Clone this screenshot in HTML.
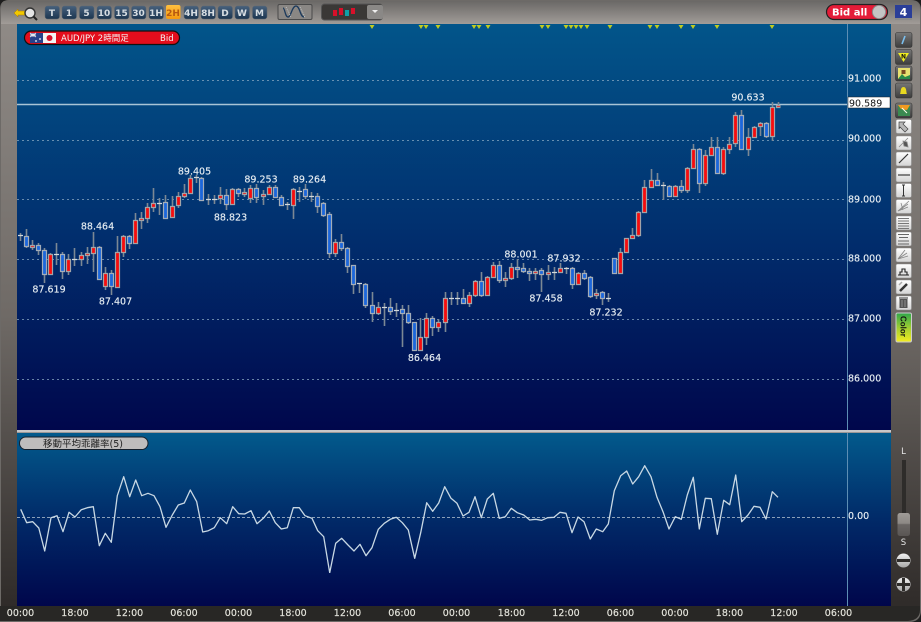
<!DOCTYPE html>
<html lang="ja">
<head>
<meta charset="utf-8">
<title>AUD/JPY Chart</title>
<style>
html,body{margin:0;padding:0;width:921px;height:622px;overflow:hidden;background:#222}
svg{display:block}
text{font-family:"DejaVu Sans","Liberation Sans",sans-serif;font-size:9.5px;fill:#e6edf2;stroke:#e6edf2;stroke-width:.15px}
.tb{font-weight:bold;font-size:9px;fill:#d6dde2;stroke:none;text-anchor:middle}
.tl{text-anchor:middle;fill:#e4e4dc;stroke:#e4e4dc}
.cl{text-anchor:middle}
.jp{font-family:"DejaVu Sans","Noto Sans CJK JP",sans-serif;stroke:none}
.n{stroke:none}
</style>
</head>
<body>
<svg width="921" height="622" viewBox="0 0 921 622" xmlns="http://www.w3.org/2000/svg">
<defs>
<filter id="soft" x="0" y="0" width="100%" height="100%"><feGaussianBlur stdDeviation=".3"/></filter>
<linearGradient id="pm" x1="0" y1="0" x2="0" y2="1"><stop offset="0" stop-color="#02558a"/><stop offset=".5" stop-color="#01306f"/><stop offset="1" stop-color="#00074c"/></linearGradient>
<linearGradient id="ps" x1="0" y1="0" x2="0" y2="1"><stop offset="0" stop-color="#025a8c"/><stop offset=".5" stop-color="#012a68"/><stop offset="1" stop-color="#00064b"/></linearGradient>
<linearGradient id="fl" x1="0" y1="0" x2="0" y2="1"><stop offset="0" stop-color="#8f8a86"/><stop offset=".5" stop-color="#6f6a66"/><stop offset="1" stop-color="#2f2b29"/></linearGradient>
<linearGradient id="ft" x1="0" y1="0" x2="0" y2="1"><stop offset="0" stop-color="#6a6866"/><stop offset="1" stop-color="#a19c98"/></linearGradient>
<linearGradient id="btn" x1="0" y1="0" x2="0" y2="1"><stop offset="0" stop-color="#47617d"/><stop offset="1" stop-color="#1b3550"/></linearGradient>
<linearGradient id="org" x1="0" y1="0" x2="0" y2="1"><stop offset="0" stop-color="#ffc040"/><stop offset="1" stop-color="#f59a10"/></linearGradient>
<linearGradient id="tool" x1="0" y1="0" x2="0" y2="1"><stop offset="0" stop-color="#777"/><stop offset="1" stop-color="#3c3c3c"/></linearGradient>
<linearGradient id="wt" x1="0" y1="0" x2="0" y2="1"><stop offset="0" stop-color="#fff"/><stop offset="1" stop-color="#d4d4d4"/></linearGradient>
<linearGradient id="col" x1="0" y1="0" x2="0" y2="1"><stop offset="0" stop-color="#2ea84a"/><stop offset=".55" stop-color="#a8d030"/><stop offset="1" stop-color="#f4ec20"/></linearGradient>
<linearGradient id="thumb" x1="0" y1="0" x2="0" y2="1"><stop offset="0" stop-color="#a09c98"/><stop offset=".45" stop-color="#8c8884"/><stop offset=".5" stop-color="#6a6664"/><stop offset="1" stop-color="#5a5654"/></linearGradient>
<linearGradient id="circ" x1="0" y1="0" x2="0" y2="1"><stop offset="0" stop-color="#f2f2f2"/><stop offset="1" stop-color="#a8a8a8"/></linearGradient>
</defs>

<!-- frame -->
<rect width="921" height="622" fill="#1e1e1e"/>
<path d="M9 0H911Q921 0 921 10V610Q921 622 909 622H0V9Q0 0 9 0Z" fill="#6d6a67"/>
<path d="M9 1H911Q920 1 920 10V24H1V9Q1 1 9 1Z" fill="url(#ft)"/>
<rect x="1" y="24" width="16" height="582" fill="url(#fl)"/>
<path d="M891 24H920V606Q920 610 916 606H891Z" fill="url(#fl)"/>
<path d="M0 606H920V610Q920 620 908 621H0Z" fill="#282725"/>

<!-- panels -->
<rect x="17" y="24" width="874" height="406" fill="url(#pm)"/>
<rect x="17" y="430" width="874" height="2.5" fill="#c9c7c8"/>
<rect x="17" y="433" width="874" height="173" fill="url(#ps)"/>

<!-- grid -->
<g stroke="#8aa8c2" stroke-width="1" stroke-dasharray="2 3" fill="none" opacity=".75">
<path d="M17 80.5H847M17 140.5H847M17 199.5H847M17 259.5H847M17 319.5H847M17 379.5H847"/>
</g>
<path d="M17 517.5H847" stroke="#b8c8d4" stroke-width="1" stroke-dasharray="3 2" fill="none" opacity=".75"/>
<path d="M847.5 24V430M847.5 433V606" stroke="#5d8eb4" stroke-width="1" fill="none"/>
<path d="M17 104.5H847" stroke="#a8c4d6" stroke-width="1.4" fill="none"/>

<g filter="url(#soft)">
<!-- wicks -->
<path fill="none" stroke="#7b8894" stroke-width="1.6" d="M20.5 233V241M26.5 229V248M32.5 240V250M38.5 243V255M44.5 248V283M50.5 253V275M56.5 243V265M62.5 252V279M68.5 254V275M74.5 248V266M81.5 252V266M87.5 247V264M93.5 232V272M99.5 246V280M105.5 267V290M111.5 270V295M117.5 236V287M123.5 235V257M129.5 235V249M135.5 213V244M141.5 212V229M147.5 203V223M153.5 188V212M159.5 198V215M165.5 195V218M172.5 196V218M178.5 192V208M184.5 184V198M190.5 175V193M196.5 175V183M201.5 177V201M208.5 194V205M214.5 195V204M220.5 187V204M226.5 189V210M232.5 188V205M238.5 188V197M244.5 188V197M250.5 185V203M256.5 184V203M263.5 190V205M269.5 185V195M275.5 185V198M281.5 195V206M287.5 202V210M293.5 188V219M299.5 187V202M305.5 184V199M311.5 192V202M317.5 193V213M323.5 202V217M329.5 212V258M335.5 239V257M341.5 234V251M347.5 247V273M353.5 265V294M359.5 283V293M365.5 283V308M372.5 292V322M378.5 302V315M384.5 303V326M390.5 298V315M396.5 303V317M402.5 305V347M408.5 305V324M414.5 322V351M420.5 318V351M426.5 313V345M432.5 316V336M438.5 319V332M445.5 292V332M451.5 292V305M457.5 292V305M463.5 289V304M469.5 292V307M475.5 280V297M481.5 272V297M487.5 276V295M493.5 262V277M499.5 261V283M505.5 272V287M511.5 263V280M517.5 259V278M523.5 263V273M529.5 268V281M535.5 268V280M541.5 268V292M548.5 265V280M554.5 267V280M560.5 263V273M566.5 267V274M572.5 267V289M578.5 272V285M584.5 270V280M590.5 276V298M596.5 289V299M602.5 291V305M608.5 293V302M614.5 258V274M620.5 248V273M626.5 238V253M632.5 228V238M638.5 211V237M644.5 180V213M651.5 169V188M657.5 173V186M663.5 182V200M669.5 185V197M675.5 185V197M681.5 180V193M687.5 167V193M693.5 144V169M699.5 148V193M705.5 150V186M711.5 137V156M717.5 137V174M723.5 147V175M729.5 137V154M735.5 112V147M741.5 110V150M748.5 128V156M754.5 126V138M760.5 122V136M766.5 122V138M772.5 102V141M778.5 102V107"/>

<!-- doji -->
<path fill="none" stroke="#d2d8dc" stroke-width="1.3" d="M18 235.5h5M54 254.5h5M72 259.5h5M157 203.5h5M194 177.5h5M206 199.5h5M212 199.5h5M285 204.5h5M297 191.5h5M309 196.5h5M357 283.5h5M382 307.5h5M394 310.5h5M449 298.5h5M455 298.5h5M552 272.5h5M564 268.5h5M606 298.5h5M661 185.5h5"/>

<!-- red bodies -->
<path fill="#f60a0a" stroke="#a3a3a8" stroke-width="1.2" d="M30.5 245.5h4v2h-4zM48.5 254.5h4v20h-4zM66.5 259.5h4v12h-4zM79.5 255.5h4v4h-4zM85.5 253.5h4v2h-4zM91.5 247.5h4v6h-4zM103.5 273.5h4v13h-4zM115.5 252.5h4v35h-4zM121.5 236.5h4v16h-4zM133.5 220.5h4v23h-4zM139.5 218.5h4v2h-4zM145.5 207.5h4v11h-4zM151.5 203.5h4v4h-4zM170.5 206.5h4v11h-4zM176.5 196.5h4v9h-4zM182.5 193.5h4v3h-4zM188.5 178.5h4v15h-4zM218.5 195.5h4v3h-4zM230.5 189.5h4v15h-4zM242.5 192.5h4v2h-4zM248.5 188.5h4v10h-4zM261.5 194.5h4v2h-4zM267.5 187.5h4v7h-4zM291.5 189.5h4v16h-4zM333.5 242.5h4v11h-4zM376.5 307.5h4v6h-4zM418.5 337.5h4v13h-4zM424.5 318.5h4v19h-4zM436.5 322.5h4v5h-4zM443.5 298.5h4v24h-4zM467.5 295.5h4v8h-4zM473.5 281.5h4v14h-4zM485.5 277.5h4v18h-4zM491.5 265.5h4v12h-4zM503.5 278.5h4v2h-4zM509.5 267.5h4v11h-4zM533.5 271.5h4v2h-4zM546.5 272.5h4v2h-4zM558.5 268.5h4v4h-4zM576.5 273.5h4v11h-4zM594.5 293.5h4v2h-4zM618.5 252.5h4v21h-4zM624.5 238.5h4v14h-4zM630.5 235.5h4v3h-4zM636.5 212.5h4v23h-4zM642.5 187.5h4v25h-4zM649.5 180.5h4v7h-4zM673.5 186.5h4v10h-4zM685.5 168.5h4v22h-4zM691.5 149.5h4v19h-4zM703.5 155.5h4v28h-4zM709.5 147.5h4v8h-4zM721.5 149.5h4v24h-4zM727.5 144.5h4v5h-4zM733.5 115.5h4v28h-4zM746.5 137.5h4v12h-4zM752.5 127.5h4v10h-4zM758.5 123.5h4v3h-4zM770.5 107.5h4v29h-4zM776.5 105.5h4v2h-4z"/>

<!-- blue bodies -->
<path fill="#1a66dc" stroke="#a3adb8" stroke-width="1.2" d="M24.5 236.5h4v10h-4zM36.5 245.5h4v5h-4zM42.5 250.5h4v24h-4zM60.5 254.5h4v17h-4zM97.5 247.5h4v32h-4zM109.5 273.5h4v13h-4zM127.5 236.5h4v7h-4zM163.5 202.5h4v16h-4zM199.5 178.5h4v22h-4zM224.5 195.5h4v9h-4zM236.5 189.5h4v4h-4zM254.5 188.5h4v9h-4zM273.5 187.5h4v10h-4zM279.5 197.5h4v8h-4zM303.5 189.5h4v7h-4zM315.5 196.5h4v10h-4zM321.5 203.5h4v12h-4zM327.5 214.5h4v39h-4zM339.5 242.5h4v6h-4zM345.5 248.5h4v18h-4zM351.5 265.5h4v19h-4zM363.5 284.5h4v21h-4zM370.5 305.5h4v8h-4zM388.5 307.5h4v4h-4zM400.5 309.5h4v4h-4zM406.5 313.5h4v9h-4zM412.5 322.5h4v28h-4zM430.5 318.5h4v9h-4zM461.5 298.5h4v5h-4zM479.5 281.5h4v14h-4zM497.5 265.5h4v15h-4zM515.5 267.5h4v2h-4zM521.5 268.5h4v3h-4zM527.5 271.5h4v2h-4zM539.5 270.5h4v4h-4zM570.5 268.5h4v16h-4zM582.5 273.5h4v5h-4zM588.5 277.5h4v19h-4zM600.5 292.5h4v6h-4zM612.5 258.5h4v15h-4zM655.5 180.5h4v5h-4zM667.5 186.5h4v10h-4zM679.5 186.5h4v4h-4zM697.5 149.5h4v34h-4zM715.5 147.5h4v26h-4zM739.5 115.5h4v34h-4zM764.5 123.5h4v13h-4z"/>

<!-- indicator line -->
<polyline fill="none" stroke="#c8d8e4" stroke-width="1.3" stroke-linejoin="round" points="20.7,509.3 26.7,522.7 32.7,521.7 38.8,528 44.7,551 51,517.7 57,515.7 63,531.7 69,512.3 75,517 81.3,509.7 87.3,507.7 93.3,506.7 99.3,545.7 105.3,533.3 111.3,542.3 117.3,495.7 123.7,476.7 129.7,496.7 135.7,480 141.7,495.7 148,493.3 154,495.7 160,506.7 166,527.3 172.3,515 178.3,505 184.3,503 190.3,490 196.7,501.7 202.7,532 208.3,530.7 214.3,527.7 220.3,517.7 226.7,523.7 232.7,506.7 238.7,513.7 244.7,514 251,510.7 257,523.7 263.3,518.3 269.3,511 275.3,522.7 281.3,529 287.3,527.7 293.3,507.7 299.3,507.7 305,515.7 312,518.3 317.7,530.7 323.7,536.7 329.7,572.7 335.7,543.3 341.7,538.3 348,545 354,551 360,544.3 366,555.7 372,547.7 378.3,529.3 384.3,523.3 390.3,519.3 396.3,517.3 402.3,522.7 408.3,530 414.7,558.3 420.7,532.7 426.7,502.7 432.7,511.3 438.7,503 444.7,486.7 451,498.3 457,503.3 463,516 469,512.3 475,496.7 481.3,517.7 487.3,499 493.3,493.3 499.3,518.3 505.3,516.7 511.3,508.3 517.3,512.7 523.7,515 529.7,520 535.7,519.3 541.7,520.3 547.7,517.7 554,517.3 560,512.3 566,513.3 572,532.7 578,517 584,521.7 590.3,539 596.3,529 602.7,531.7 608.3,524 614.3,490.7 620.7,475.7 626.7,471 632.7,484 638.7,476.7 644.7,465.7 651,476.7 657,497.3 663,511.7 669,529 675.3,516.7 681.3,519.3 687.3,495 693.3,477.3 699.3,529 705.3,498.3 711.3,498.7 717.3,534.3 723.7,500.3 729.7,504.7 735.7,475 741.7,521.7 748,515 754,506.3 760,507.3 766,519 772.3,491.7 778,497.3"/>
</g>

<!-- callouts -->
<g>
<text class="cl" x="194.5" y="174.5">89.405</text>
<text class="cl" x="97.5" y="229.5">88.464</text>
<text class="cl" x="49" y="292.5">87.619</text>
<text class="cl" x="115.5" y="304.5">87.407</text>
<text class="cl" x="261" y="182.5">89.253</text>
<text class="cl" x="230.5" y="220.5">88.823</text>
<text class="cl" x="309.5" y="182.5">89.264</text>
<text class="cl" x="424.5" y="361">86.464</text>
<text class="cl" x="521" y="257.5">88.001</text>
<text class="cl" x="564" y="261.5">87.932</text>
<text class="cl" x="546" y="301.5">87.458</text>
<text class="cl" x="606" y="315.5">87.232</text>
<text class="cl" x="748" y="100.5">90.633</text>
</g>

<!-- axis labels -->
<text x="848" y="81.5">91.000</text>
<text x="848" y="141.5">90.000</text>
<text x="848" y="202.5">89.000</text>
<text x="848" y="261.5">88.000</text>
<text x="848" y="321.5">87.000</text>
<text x="848" y="381.5">86.000</text>
<rect x="848" y="97" width="42" height="11" fill="#fff" stroke="#222" stroke-width=".5"/>
<text class="n" x="849" y="106.3" style="fill:#111">90.589</text>
<text x="848" y="519">0.00</text>

<!-- signal markers -->
<path fill="#c0cc20" d="M369.500 25h5l-2.500 4zM418.500 25h5l-2.500 4zM423.500 25h5l-2.500 4zM435.500 25h5l-2.500 4zM471.500 25h5l-2.500 4zM476.500 25h5l-2.500 4zM485.500 25h5l-2.500 4zM539.500 25h5l-2.500 4zM545.500 25h5l-2.500 4zM563.500 25h5l-2.500 4zM568.500 25h5l-2.500 4zM573.500 25h5l-2.500 4zM578.500 25h5l-2.500 4zM584.500 25h5l-2.500 4zM607.500 25h5l-2.500 4zM647.500 25h5l-2.500 4zM654.500 25h5l-2.500 4zM678.500 25h5l-2.500 4zM690.500 25h5l-2.500 4zM714.500 25h5l-2.500 4zM769.500 25h5l-2.500 4z"/>

<!-- time axis -->
<g>
<text class="tl" x="20.5" y="616">00:00</text><text class="tl" x="75" y="616">18:00</text><text class="tl" x="129.5" y="616">12:00</text><text class="tl" x="184" y="616">06:00</text><text class="tl" x="238.5" y="616">00:00</text><text class="tl" x="293" y="616">18:00</text><text class="tl" x="347.5" y="616">12:00</text><text class="tl" x="402" y="616">06:00</text><text class="tl" x="456.5" y="616">00:00</text><text class="tl" x="511.5" y="616">18:00</text><text class="tl" x="566" y="616">12:00</text><text class="tl" x="620.5" y="616">06:00</text><text class="tl" x="675" y="616">00:00</text><text class="tl" x="729.5" y="616">18:00</text><text class="tl" x="784" y="616">12:00</text><text class="tl" x="838.5" y="616">06:00</text>
</g>

<!-- indicator pill -->
<rect x="19.5" y="437" width="128.5" height="12.5" rx="6.2" fill="#bfbdbd" stroke="#15202c" stroke-width="1"/>
<text class="jp" x="43" y="447" style="fill:#222;font-size:9.5px">移動平均乖離率(5)</text>

<!-- symbol pill -->
<rect x="24.5" y="31" width="155" height="13.5" rx="6.7" fill="#e40d1c" stroke="#111" stroke-width="1.2"/>
<rect x="30" y="33" width="13" height="10" fill="#27408a"/>
<path d="M30 33l6 4M36 33l-6 4M33 33v4M30 35h6" stroke="#e8e8f0" stroke-width=".9"/>
<circle cx="40" cy="39" r=".9" fill="#fff"/><circle cx="36" cy="41" r=".9" fill="#fff"/>
<rect x="43" y="33" width="13" height="10" fill="#f4f4f4"/>
<circle cx="49.5" cy="38" r="3" fill="#d8102a"/>
<text class="jp" x="61" y="41" style="font-size:8.5px;fill:#f4f4f4">AUD/JPY 2時間足</text>
<text class="n" x="160" y="41" style="font-size:8.5px;fill:#f4f4f4">Bid</text>

<!-- magnifier icon -->
<path d="M14 13l4-4v2h7v4h-7v2z" fill="#f2c800" stroke="#a87a00" stroke-width=".5"/>
<circle cx="30" cy="13" r="5" fill="#e4e4e4" stroke="#333" stroke-width="1.4"/>
<path d="M33.5 16.5L37 20" stroke="#222" stroke-width="2"/>

<!-- timeframe buttons -->
<g fill="url(#btn)" stroke="#5c6670" stroke-width=".5">
<rect x="45" y="6" width="14.5" height="13" rx="2.5"/><rect x="62" y="6" width="14.5" height="13" rx="2.5"/><rect x="79.5" y="6" width="14.5" height="13" rx="2.5"/><rect x="97" y="6" width="14.5" height="13" rx="2.5"/><rect x="114.5" y="6" width="14.5" height="13" rx="2.5"/><rect x="131.5" y="6" width="14.5" height="13" rx="2.5"/><rect x="149" y="6" width="14.5" height="13" rx="2.5"/><rect x="184" y="6" width="14.5" height="13" rx="2.5"/><rect x="201" y="6" width="14.5" height="13" rx="2.5"/><rect x="218" y="6" width="14.5" height="13" rx="2.5"/><rect x="235" y="6" width="14.5" height="13" rx="2.5"/><rect x="252.5" y="6" width="14.5" height="13" rx="2.5"/>
</g>
<rect x="166" y="5" width="14.5" height="14" rx="2" fill="url(#org)"/>
<g>
<text class="tb" x="52" y="16">T</text><text class="tb" x="69" y="16">1</text><text class="tb" x="86.5" y="16">5</text><text class="tb" x="104" y="16">10</text><text class="tb" x="121.5" y="16">15</text><text class="tb" x="138.5" y="16">30</text><text class="tb" x="156" y="16">1H</text>
<text class="tb" x="173" y="16" style="fill:#b85a10">2H</text>
<text class="tb" x="191" y="16">4H</text><text class="tb" x="208" y="16">8H</text><text class="tb" x="225" y="16">D</text><text class="tb" x="242" y="16">W</text><text class="tb" x="259.5" y="16">M</text>
</g>

<!-- indicator button -->
<rect x="278" y="4.5" width="34" height="15" rx="1.5" fill="#8a8784" stroke="#4a4a4a"/>
<path d="M283 8c2 0 2 9 5 9c3 0 4-11 8-11c4 0 4 11 8 11" fill="none" stroke="#1c3a5c" stroke-width="1.3"/>
<path d="M286 7l5 10M300 7l5 10" fill="none" stroke="#cfd8dc" stroke-width=".7" stroke-dasharray="1 1"/>

<!-- chart type box -->
<rect x="321.5" y="4" width="61" height="16" rx="3" fill="#3a3836" stroke="#555"/>
<rect x="333" y="10" width="4" height="6" fill="#d8102a"/><rect x="339" y="8" width="4" height="7" fill="#d8102a"/><rect x="345" y="10" width="4" height="6" fill="#0fa0a8"/><rect x="351" y="8" width="4" height="6" fill="#d8102a"/>
<rect x="367" y="5" width="16" height="14" rx="2" fill="#8a8886"/>
<path d="M372 10h6l-3 3z" fill="#eee"/>

<!-- bid all -->
<rect x="826.5" y="4.5" width="61" height="15" rx="7.5" fill="#e41c38" stroke="#222" stroke-width="1.2"/>
<text class="n" x="832" y="15.5" style="font-weight:bold;font-size:10px;fill:#fff">Bid all</text>
<circle cx="879" cy="12" r="6.6" fill="#c4c4c4" stroke="#8a8a8a"/>

<!-- 4 button -->
<rect x="895" y="5" width="17" height="13" fill="#2a3e98"/>
<rect x="895" y="18" width="17" height="2" fill="#8a8a8a"/>
<text class="n" x="903.5" y="16" style="font-weight:bold;font-size:11px;fill:#fff;text-anchor:middle">4</text>

<!-- right tools: dark -->
<g fill="url(#tool)" stroke="#333" stroke-width=".6">
<rect x="895.5" y="32.5" width="16.5" height="15" rx="2"/><rect x="895.5" y="49.5" width="16.5" height="15" rx="2"/><rect x="895.5" y="66" width="16.5" height="15" rx="2"/><rect x="895.5" y="83" width="16.5" height="15" rx="2"/><rect x="895.5" y="103" width="16.5" height="15" rx="2"/>
</g>
<path d="M902 44l3-8" stroke="#7cc0f0" stroke-width="1.6"/>
<path d="M898 53h11l-5.5 9z" fill="#f0ee20"/><text class="n" x="903.5" y="58.5" style="font-size:6px;font-weight:bold;fill:#111;text-anchor:middle">N</text>
<rect x="898" y="68" width="12" height="11" fill="#e8e070"/><path d="M898 79l4-5 3 3 5-2v4z" fill="#2a8a4a"/><rect x="901.5" y="70" width="4" height="4" fill="#7a4a20"/>
<path d="M900 94c1-1 0-7 3.5-7s2.500 6 3.500 7z" fill="#e8d820"/>
<rect x="898" y="105" width="12" height="11" fill="#3a8a50"/><path d="M898 105h12l-3 5-6-1z" fill="#f09a20"/><path d="M902 108l5 5" stroke="#ffe" stroke-width="1"/>

<!-- right tools: white -->
<g fill="url(#wt)" stroke="#8a8a8a" stroke-width=".6">
<rect x="896" y="119.500" width="15.500" height="14" rx="1.500"/><rect x="896" y="136" width="15.500" height="14" rx="1.500"/><rect x="896" y="152" width="15.500" height="14" rx="1.500"/><rect x="896" y="168" width="15.500" height="14" rx="1.500"/><rect x="896" y="183.500" width="15.500" height="14" rx="1.500"/><rect x="896" y="199.500" width="15.500" height="14" rx="1.500"/><rect x="896" y="216" width="15.500" height="14" rx="1.500"/><rect x="896" y="232" width="15.500" height="14" rx="1.500"/><rect x="896" y="248" width="15.500" height="14" rx="1.500"/><rect x="896" y="264" width="15.500" height="14" rx="1.500"/><rect x="896" y="280" width="15.500" height="14" rx="1.500"/><rect x="896" y="296" width="15.500" height="14" rx="1.500"/>
</g>
<path d="M899 122h6l-2 2 5 5-3 3-5-5-1 2z" fill="#b8b8b8" stroke="#444" stroke-width=".7"/>
<path d="M899 147l9-9M903 141l4 1 1 5-4-1z" fill="#555" stroke="#888" stroke-width=".8"/>
<path d="M899 163l9-9" stroke="#333" stroke-width="1.2"/>
<path d="M898 175h12" stroke="#555" stroke-width="1.4"/>
<path d="M903.500 185v11M902 185h3M902 196h3" stroke="#333" stroke-width="1"/>
<path d="M898 211l10-4M898 211l10-7M898 211l11-10M901 203l2 7" fill="none" stroke="#888" stroke-width=".8"/>
<path d="M898 218.500h11M898 221h11M898 223.500h11M898 226h11M898 228.500h11" stroke="#777" stroke-width=".9"/>
<path d="M898 234.500h11M899 237.500h9M898 241h11M898 244h11" stroke="#666" stroke-width=".9"/>
<path d="M898 259l10-3M898 259l9-6M898 259l7-9" fill="none" stroke="#888" stroke-width=".9"/>
<path d="M898 275h11M900 275v-3h2v-3h3v3h2v3" fill="none" stroke="#222" stroke-width="1.100"/>
<path d="M900 291l7-7" stroke="#333" stroke-width="2.500"/><path d="M899 285l3-3" stroke="#aaa" stroke-width="1.500"/>
<path d="M899.500 299h8v9h-8z" fill="#555"/><path d="M899 298h9" stroke="#333"/><path d="M902 300v7M905 300v7" stroke="#aaa" stroke-width=".7"/>
<rect x="896" y="313" width="15.500" height="29" rx="1.500" fill="url(#col)" stroke="#ccc" stroke-width="1"/>
<text class="n" transform="translate(900.500 316) rotate(90)" style="font-size:8px;font-weight:bold;fill:#111;font-family:'Liberation Sans',sans-serif">Color</text>

<!-- slider -->
<text class="n" x="903.500" y="454" style="text-anchor:middle;fill:#e8e8e8;font-size:8.500px">L</text>
<rect x="902" y="460" width="4" height="55" fill="#2e2c2a"/>
<rect x="897.500" y="513" width="12.500" height="23" rx="2.500" fill="url(#thumb)"/>
<text class="n" x="903.500" y="545" style="text-anchor:middle;fill:#e8e8e8;font-size:8.500px">S</text>
<circle cx="903.500" cy="560.500" r="7" fill="url(#circ)"/>
<rect x="897" y="559" width="13" height="3" fill="#2e2c2a"/>
<circle cx="903.500" cy="584.500" r="7" fill="url(#circ)"/>
<rect x="897" y="583" width="13" height="3" fill="#2e2c2a"/><rect x="902" y="578" width="3" height="13" fill="#2e2c2a"/>
</svg>
</body>
</html>
